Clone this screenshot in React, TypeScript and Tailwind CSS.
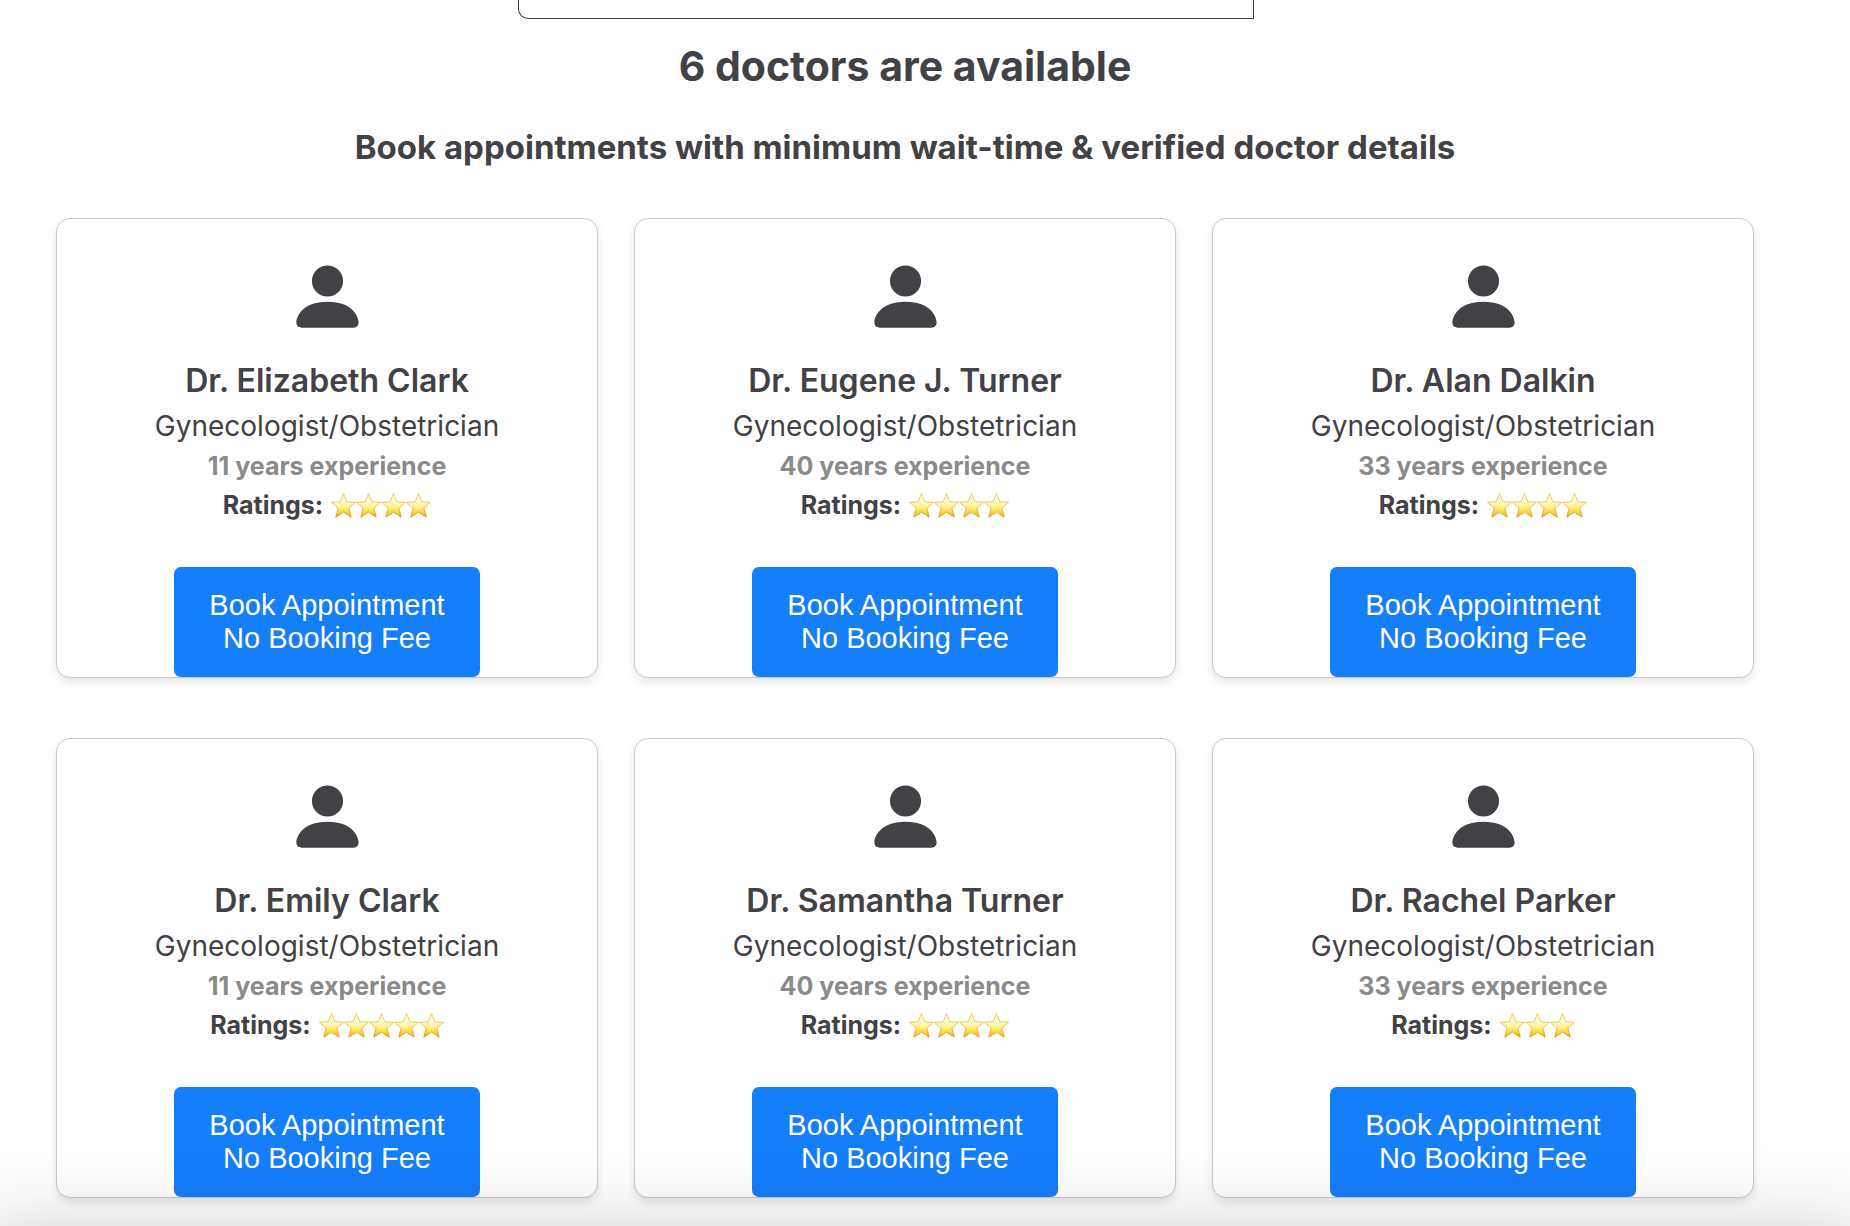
import { BsPersonFill } from "react-icons/bs";

type Doctor = {
  name: string;
  specialty: string;
  experience: number;
  stars: number;
};

const doctors: Doctor[] = [
  { name: "Dr. Elizabeth Clark", specialty: "Gynecologist/Obstetrician", experience: 11, stars: 4 },
  { name: "Dr. Eugene J. Turner", specialty: "Gynecologist/Obstetrician", experience: 40, stars: 4 },
  { name: "Dr. Alan Dalkin", specialty: "Gynecologist/Obstetrician", experience: 33, stars: 4 },
  { name: "Dr. Emily Clark", specialty: "Gynecologist/Obstetrician", experience: 11, stars: 5 },
  { name: "Dr. Samantha Turner", specialty: "Gynecologist/Obstetrician", experience: 40, stars: 4 },
  { name: "Dr. Rachel Parker", specialty: "Gynecologist/Obstetrician", experience: 33, stars: 3 },
];

function StarDefs() {
  return (
    <svg className="absolute size-0" aria-hidden="true">
      <defs>
        <linearGradient id="star-fill" x1="0" y1="0" x2="0" y2="1">
          <stop offset="0" stopColor="#fff3b8" />
          <stop offset="0.35" stopColor="#fffbd2" />
          <stop offset="0.6" stopColor="#fff08a" />
          <stop offset="0.8" stopColor="#fdd535" />
          <stop offset="1" stopColor="#f6a81c" />
        </linearGradient>
        <linearGradient id="star-edge" x1="0" y1="0" x2="0" y2="1">
          <stop offset="0" stopColor="#fbcb74" />
          <stop offset="0.5" stopColor="#f5c04e" />
          <stop offset="1" stopColor="#e5941d" />
        </linearGradient>
      </defs>
    </svg>
  );
}

function Star() {
  return (
    <svg viewBox="0 0 25 25" className="size-[25px]" aria-hidden="true">
      <path
        d="M12.5 .2 15.9 8.9 24.6 9.3 17.8 15 20.2 24.2 12.5 19.1 4.8 24.2 7.2 15 .4 9.3 9.1 8.9Z"
        fill="url(#star-fill)"
        stroke="url(#star-edge)"
        strokeWidth="1"
        strokeLinejoin="round"
      />
    </svg>
  );
}

function DoctorCard({ doctor }: { doctor: Doctor }) {
  return (
    <article className="flex flex-col items-center rounded-[14px] border border-[#c8c8c8] bg-white pt-9 text-center shadow-[0_4px_8px_rgba(0,0,0,0.1)]">
      <BsPersonFill className="size-[83px]" aria-hidden="true" />
      <h3 className="mt-5 text-[32px] leading-[46px] font-semibold">{doctor.name}</h3>
      <p className="text-[28px] leading-[44px]">{doctor.specialty}</p>
      <p className="text-[25px] leading-[37px] font-bold text-[#8a8a8a]">
        {doctor.experience} years experience
      </p>
      <div className="flex items-center gap-2 text-[25px] leading-[40px] font-bold">
        <span>Ratings:</span>
        <span className="flex" role="img" aria-label={`${doctor.stars} stars`}>
          {Array.from({ length: doctor.stars }, (_, i) => (
            <Star key={i} />
          ))}
        </span>
      </div>
      <button
        type="button"
        className="mt-[42px] rounded-[7px] bg-[#157efb] px-[35px] py-[22px] font-['Liberation_Sans',Arial,sans-serif] text-[29px] leading-[33px] text-white"
      >
        <span className="block">Book Appointment</span>
        <span className="block">No Booking Fee</span>
      </button>
    </article>
  );
}

export default function App() {
  return (
    <div className="relative h-screen overflow-hidden bg-white font-[Inter,sans-serif] text-[#424146]">
      <StarDefs />
      <main className="pr-24 pl-14">
        <div className="mx-auto flex w-[774px] justify-start">
          <input
            type="text"
            aria-label="Search doctors"
            className="h-[19px] w-[736px] rounded-bl-[10px] border border-t-0 border-[#424146] bg-white px-4 outline-none"
          />
        </div>
        <h1 className="mt-[15px] text-center text-[41px] leading-[64px] font-bold">
          6 doctors are available
        </h1>
        <h2 className="mt-6 text-center text-[33px] leading-[50px] font-[650]">
          Book appointments with minimum wait-time &amp; verified doctor details
        </h2>
        <section aria-label="Doctors" className="mt-[46px] grid grid-cols-3 gap-x-9 gap-y-[60px]">
          {doctors.map((doctor) => (
            <DoctorCard key={doctor.name} doctor={doctor} />
          ))}
        </section>
      </main>
      <div className="pointer-events-none absolute -inset-x-5 top-full h-40 shadow-[0_0_80px_rgba(0,0,0,0.18)]" />
    </div>
  );
}
